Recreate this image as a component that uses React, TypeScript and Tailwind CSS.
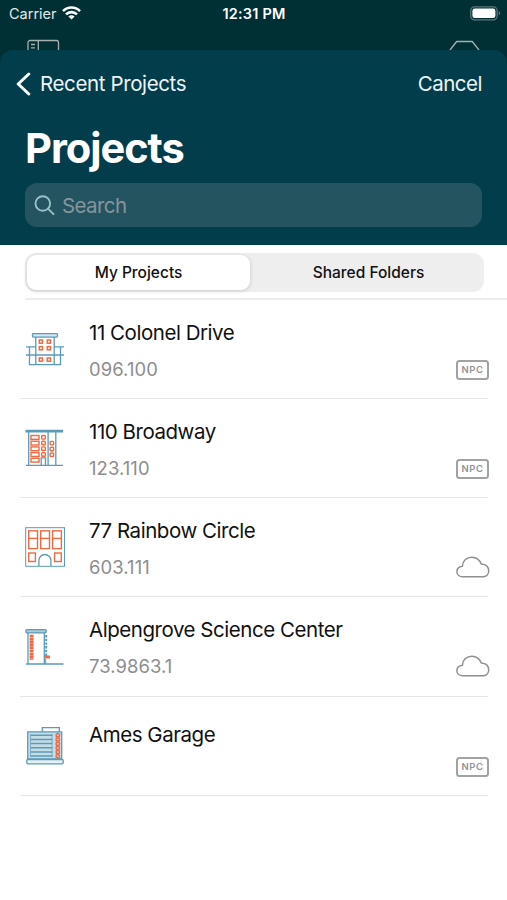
import type { ReactNode } from "react";

type ProjectStatus = "npc" | "cloud";

interface Project {
  name: string;
  number?: string;
  status: ProjectStatus;
  icon: ReactNode;
}

const BLUE = "#5b9bb8";
const ORANGE = "#ee6a42";

const BuildingIcon = ({ children }: { children: ReactNode }) => (
  <svg
    viewBox="0 0 40 40"
    fill="none"
    stroke={BLUE}
    strokeWidth="1.3"
    className="h-10 w-10 shrink-0"
    aria-hidden="true"
  >
    {children}
  </svg>
);

const ColonelIcon = () => (
  <BuildingIcon>
    <rect x="7.5" y="4.7" width="25" height="3.4" rx="0.8" fill="#d5e6ed" />
    <path d="M10.8 8v27.6M29.2 8v27.6M4.5 17.8v17.8h31V17.8M1 17.8h9.8M29.2 17.8H39M1 26h38" />
    <g stroke={ORANGE} strokeWidth="1.5">
      {[11, 17.6, 29].map((y) => (
        <g key={y}>
          <rect x="14.3" y={y} width="3.2" height="3.2" />
          <rect x="22.3" y={y} width="3.2" height="3.2" />
        </g>
      ))}
    </g>
  </BuildingIcon>
);

const BroadwayIcon = () => (
  <BuildingIcon>
    <path d="M0.5 3.2h37.5" strokeWidth="2.8" />
    <path d="M3.7 4v33.3M23.1 4v33.3M30.8 4v33.3M1 37.3h37" />
    <g stroke={ORANGE} strokeWidth="1.4">
      {[7.5, 13.2, 18.9, 24.6, 30.3].map((y) => (
        <rect key={y} x="6" y={y} width="8" height="3.8" />
      ))}
      {[7.5, 13.2, 18.9, 24.6].map((y) => (
        <rect key={y} x="16.7" y={y} width="3.6" height="3.6" rx="0.8" />
      ))}
      {[13.4, 19.2, 25].map((y) => (
        <rect key={y} x="25.1" y={y} width="3.5" height="3.5" rx="0.8" />
      ))}
    </g>
    <path d="M16.2 37v-7.2h4.3V37" />
  </BuildingIcon>
);

const RainbowIcon = () => (
  <BuildingIcon>
    <rect x="0.7" y="0.7" width="38.8" height="38.6" strokeWidth="1" />
    <g stroke={ORANGE} strokeWidth="1.4">
      {[3.7, 15.7, 27.6].map((x) => (
        <g key={x}>
          <rect x={x} y="3.8" width="8.8" height="17.8" />
          <path d={`M${x} 11.4h8.8`} />
        </g>
      ))}
      <rect x="3.7" y="26" width="6.7" height="8.5" />
      <rect x="29.6" y="26" width="6.7" height="8.5" />
    </g>
    <path d="M13.9 39v-5.5a6 6 0 0 1 12 0V39" />
  </BuildingIcon>
);

const AlpengroveIcon = () => (
  <BuildingIcon>
    <rect x="0.9" y="3.7" width="20.3" height="3.2" rx="1.1" fill="#aacbd8" />
    <path d="M3 7v31M19.3 7v31M1 38h37.5" />
    <path d="M21.2 9v22" strokeWidth="2" strokeDasharray="2.4 1.3" />
    <path d="M6.6 8.7v25" stroke={ORANGE} strokeWidth="4" strokeDasharray="2.6 0.35" />
    <path d="M19.7 31H25" stroke={ORANGE} strokeWidth="3" />
    <path d="M20.7 33v5" strokeWidth="1" />
  </BuildingIcon>
);

const GarageIcon = () => (
  <BuildingIcon>
    <path d="M17.3 5.7V1.6h17v4.1" />
    <rect x="2.7" y="5.9" width="34" height="27" fill="#c6dde6" />
    <path
      d="M5.8 9.2h21.7M5.8 13.4h21.7M5.8 17.6h21.7M5.8 21.8h21.7M5.8 26h21.7M5.8 30.1h21.7"
      strokeWidth="1.5"
    />
    <path d="M5.5 8v23M27 8v23" strokeWidth="0.7" />
    <g stroke={ORANGE} strokeWidth="1.5">
      {[7.8, 12, 16.2, 20.4, 24.6, 28.8].map((y) => (
        <rect key={y} x="31.2" y={y} width="3.2" height="3" rx="0.8" />
      ))}
    </g>
    <rect x="1.8" y="33.5" width="36.4" height="4.3" rx="1" fill="#e6f0f4" />
  </BuildingIcon>
);

const PROJECTS: Project[] = [
  { name: "11 Colonel Drive", number: "096.100", status: "npc", icon: <ColonelIcon /> },
  { name: "110 Broadway", number: "123.110", status: "npc", icon: <BroadwayIcon /> },
  { name: "77 Rainbow Circle", number: "603.111", status: "cloud", icon: <RainbowIcon /> },
  {
    name: "Alpengrove Science Center",
    number: "73.9863.1",
    status: "cloud",
    icon: <AlpengroveIcon />,
  },
  { name: "Ames Garage", status: "npc", icon: <GarageIcon /> },
];

const StatusBar = () => (
  <div className="grid h-7 grid-cols-3 items-center pr-[6px] pl-[9px] text-[14.5px] leading-none text-[#e0e9e9]">
    <div className="flex items-center gap-[5px]">
      <span>Carrier</span>
      <svg viewBox="0 0 19 14" className="-mt-[2px] h-[14px] w-[19px]" fill="none" stroke="#fff" strokeWidth="2.6">
        <path d="M1 5.1a12 12 0 0 1 17 0M4 8.4a7.8 7.8 0 0 1 11 0" />
        <path d="M9.5 13.6 6.4 10.6a4.4 4.4 0 0 1 6.2 0z" fill="#fff" stroke="none" />
      </svg>
    </div>
    <span className="-ml-[2px] text-center font-semibold tracking-[0.2px] whitespace-nowrap text-white">
      12:31 PM
    </span>
    <svg viewBox="0 0 31 15" className="-mt-px h-[15px] w-[31px] justify-self-end">
      <rect x="0.7" y="0.9" width="26.4" height="12.9" rx="3.8" fill="none" stroke="#587577" strokeWidth="1.3" />
      <rect x="2.4" y="2.6" width="23" height="9.5" rx="2.3" fill="#fff" />
      <path d="M28.7 5v4.6c2.1-1 2.1-3.6 0-4.6z" fill="#587577" />
    </svg>
  </div>
);

// Toolbar of the screen underneath, cut off by the sheet
const BackgroundToolbar = () => (
  <div className="flex h-[22px] items-end justify-between px-[27px]">
    <svg viewBox="0 0 33 11" className="h-[11px] w-[33px]" fill="none" stroke="#a5b1b0" strokeWidth="1.3">
      <path d="M1 11V3.5a2 2 0 0 1 2-2h26.5a2 2 0 0 1 2 2V11M11.3 1.5V11M4 5.5h4M4 8.8h4" />
    </svg>
    <svg viewBox="0 0 31 11" className="h-[11px] w-[31px]" fill="none" stroke="#a5b1b0" strokeWidth="1.3">
      <path d="M1 11l6.7-8.5h15.5L30 11" />
    </svg>
  </div>
);

const StatusIcon = ({ status }: { status: ProjectStatus }) => {
  if (status === "npc") {
    return (
      <span className="mr-px flex h-5 w-[33px] items-center justify-center rounded-[3.5px] border-2 border-[#a2a2a2] text-[9.5px] leading-none font-semibold tracking-[0.5px] text-[#929292]">
        NPC
      </span>
    );
  }

  return (
    <svg viewBox="0 0 34 22" className="h-[22px] w-[34px]" fill="none" stroke="#8f8f8f" strokeWidth="1.5">
      <path d="M6.5 20.7H27.5a5.6 5.6 0 0 0 5.2-5.6c0-4-2.8-6.8-7.4-7.1C23.4 3.7 20 1.3 15.9 1.3 10.5 1.3 6.4 5 6.4 10.3 3.1 10.8.9 13 .9 15.7c0 2.8 2.3 5 5.6 5z" />
    </svg>
  );
};

const ProjectRow = ({ project }: { project: Project }) => (
  <li className="ml-5 flex h-[99.25px] w-[468px] border-b border-[#e6e6e6] pl-[5px]">
    <div className="flex items-center">{project.icon}</div>
    <div className={`ml-6 flex-1 whitespace-nowrap ${project.number ? "pt-5" : "pt-[25px]"}`}>
      <p className="text-[20.5px] leading-[26px] tracking-[-0.46px] text-[#111]">{project.name}</p>
      {project.number && (
        <p className="mt-3 text-[18.4px] leading-[22px] tracking-[0.1px] text-[#8d8d8f]">
          {project.number}
        </p>
      )}
    </div>
    <div className="-mr-[2px] flex h-[80px] items-end">
      <StatusIcon status={project.status} />
    </div>
  </li>
);

export default function App() {
  return (
    <div className="h-[900px] w-[507px] overflow-hidden bg-[#013034] font-['Inter',sans-serif]">
      <StatusBar />
      <BackgroundToolbar />

      <main>
        <header className="h-[195px] rounded-t-[13px] bg-[#023d4c] text-white">
          <div className="flex h-[68px] items-center justify-between pr-[25px] pl-4 text-[20.5px] tracking-[-0.38px] text-[#eef4f6]">
            <button className="flex items-center gap-[9px]">
              <svg viewBox="0 0 15 24" className="h-6 w-[15px]" fill="none" stroke="#fff" strokeWidth="3" strokeLinecap="round" strokeLinejoin="round">
                <path d="M12.8 2 2.2 12l10.6 10" />
              </svg>
              <span className="pt-px">Recent Projects</span>
            </button>
            <button className="pt-px tracking-[-0.5px]">Cancel</button>
          </div>
          <h1 className="ml-[25px] h-[65px] pt-[5px] text-[41.6px] leading-[50px] font-bold tracking-[-1.05px]">
            Projects
          </h1>
          <label className="ml-[25px] flex h-11 w-[457px] items-center gap-[7px] rounded-xl bg-[#245460] pl-[9px]">
            <svg viewBox="0 0 21 21" className="h-[21px] w-[21px]" fill="none" stroke="#9bc0c8" strokeWidth="1.9" strokeLinecap="round">
              <circle cx="8.8" cy="8.5" r="7.3" />
              <path d="m14.2 13.9 5.3 5.3" />
            </svg>
            <span className="pt-[2px] text-[20.5px] leading-none tracking-[-0.6px] text-[#87949d]">Search</span>
          </label>
        </header>

        <div className="h-[655px] bg-white">
          <div className="h-[53px] pt-2">
            <div className="ml-[25px] grid h-[39px] w-[459px] grid-cols-[223px_1fr] rounded-[11px] bg-[#eeeeef] p-[2px] text-[15.5px] font-medium text-[#111]">
              <button className="rounded-[9px] bg-white pt-px shadow-[0_1px_4px_rgba(0,0,0,0.16)]">
                My Projects
              </button>
              <button className="pt-px pl-[5px]">Shared Folders</button>
            </div>
          </div>

          <ul>
            <li className="ml-[25px] h-[1.5px] bg-[#ececec]" />
            {PROJECTS.map((project) => (
              <ProjectRow key={project.name} project={project} />
            ))}
          </ul>
        </div>
      </main>
    </div>
  );
}
